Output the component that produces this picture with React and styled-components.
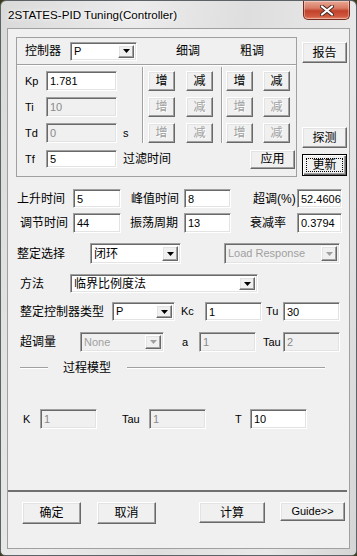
import React from 'react';
import styled, { createGlobalStyle, css } from 'styled-components';

const GlobalStyle = createGlobalStyle`
  html, body {
    margin: 0;
    padding: 0;
    background: #3b3a1c;
  }
  body {
    font-family: "Liberation Sans", "Noto Sans CJK SC", sans-serif;
    font-size: 12px;
    color: #000;
  }
  * { box-sizing: border-box; }
`;

const sunken = css`
  border: 1px solid;
  border-color: #a0a0a0 #ffffff #ffffff #a0a0a0;
  box-shadow: inset 1px 1px 0 #696969, inset -1px -1px 0 #e3e3e3;
`;

const raised = css`
  border: 1px solid;
  border-color: #ffffff #696969 #696969 #ffffff;
  box-shadow: inset -1px -1px 0 #a0a0a0, inset 1px 1px 0 #e3e3e3;
  background: #f0f0f0;
`;

const Window = styled.div`
  width: 357px;
  height: 556px;
  border: 1px solid #5d6266;
  border-radius: 6px 6px 5px 5px;
  background: linear-gradient(100deg, #d9d9d9 0%, #ececec 30%, #dedede 55%, #e9e9e9 80%, #d5d5d5 100%);
  display: flex;
  flex-direction: column;
  overflow: hidden;
`;

const TitleBar = styled.div`
  height: 27px;
  flex-shrink: 0;
  display: flex;
  align-items: flex-start;
  justify-content: space-between;
  padding-left: 7px;
`;

const TitleText = styled.span`
  margin-top: 7px;
  font-family: "Liberation Sans", sans-serif;
  font-size: 11.6px;
  color: #000;
  text-shadow: 0 0 6px #fff, 0 0 3px #fff;
`;

const CloseButton = styled.div`
  width: 47px;
  height: 19px;
  margin-right: 6px;
  border: 1px solid #7a2a1c;
  border-top: none;
  border-radius: 0 0 5px 5px;
  background: linear-gradient(#e9a896 0%, #d77a63 40%, #c2412a 55%, #d0583f 85%, #e58c70 100%);
  box-shadow: inset 0 0 0 1px rgba(255, 255, 255, 0.35);
  display: flex;
  align-items: center;
  justify-content: center;
`;

const Client = styled.div`
  flex: 1;
  margin: 0 6px 6px 6px;
  border: 1px solid #a0a0a0;
  background: #f0f0f0;
  display: flex;
  flex-direction: column;
`;

const TopArea = styled.div`
  display: flex;
  gap: 5px;
  margin-top: 8px;
  padding-left: 8px;
`;

const Group = styled.div`
  width: 281px;
  height: 140px;
  flex-shrink: 0;
  border: 1px solid #a0a0a0;
  display: flex;
  flex-direction: column;
`;

const GroupHeader = styled.div`
  height: 26px;
  display: flex;
  align-items: center;
  padding-left: 8px;
`;

const HSep = styled.div`
  height: 2px;
  border-top: 1px solid #a0a0a0;
  border-bottom: 1px solid #ffffff;
`;

const GroupBody = styled.div`
  display: flex;
  height: 76px;
  margin-top: 1px;
`;

const ParamCol = styled.div`
  width: 125px;
  padding: 4px 0 0 8px;
  display: flex;
  flex-direction: column;
  gap: 6px;
`;

const VSep = styled.div`
  width: 2px;
  border-left: 1px solid #a0a0a0;
  border-right: 1px solid #ffffff;
`;

const BtnGrid = styled.div`
  width: ${p => p.$w}px;
  padding: 4px 0 0 ${p => p.$pl}px;
  display: grid;
  grid-template-columns: 27px 27px;
  grid-auto-rows: 20px;
  column-gap: ${p => p.$gap}px;
  row-gap: 6px;
  align-content: start;
`;

const SideCol = styled.div`
  width: 45px;
  display: flex;
  flex-direction: column;
`;

const Row = styled.div`
  display: flex;
  align-items: center;
  height: ${p => p.$h || 20}px;
  margin-top: ${p => p.$mt || 0}px;
  padding-left: ${p => (p.$pl === undefined ? 9 : p.$pl)}px;
  flex-shrink: 0;
`;

const Label = styled.span`
  width: ${p => (p.$w ? `${p.$w}px` : 'auto')};
  padding-left: ${p => p.$pl || 0}px;
  margin-left: ${p => p.$ml || 0}px;
  flex-shrink: 0;
  font-size: ${p => (p.$latin ? '11px' : '12px')};
  line-height: 1;
  white-space: nowrap;
`;

const Field = styled.input.attrs({ readOnly: true })`
  ${sunken}
  width: ${p => p.$w}px;
  height: ${p => p.$h || 20}px;
  flex-shrink: 0;
  padding: 0 0 0 3px;
  margin: 0;
  font-family: "Liberation Sans", sans-serif;
  font-size: 11px;
  color: #000;
  background: #ffffff;
  outline: none;
  &:disabled {
    background: #f0f0f0;
    color: #8a8a8a;
  }
`;

const ComboBox = styled.div`
  ${sunken}
  width: ${p => p.$w}px;
  height: ${p => p.$h || 20}px;
  flex-shrink: 0;
  padding: 2px;
  display: flex;
  align-items: stretch;
  background: ${p => (p.$disabled ? '#f0f0f0' : '#ffffff')};
`;

const ComboText = styled.span`
  flex: 1;
  display: flex;
  align-items: center;
  padding-left: 1px;
  font-size: ${p => (p.$latin ? '11px' : '12px')};
  line-height: 1;
  color: ${p => (p.$disabled ? '#a0a0a0' : '#000')};
  white-space: nowrap;
`;

const ComboArrow = styled.span`
  ${raised}
  width: 16px;
  display: flex;
  align-items: center;
  justify-content: center;
`;

const Button = styled.button`
  ${raised}
  width: ${p => p.$w}px;
  height: ${p => p.$h || 20}px;
  flex-shrink: 0;
  margin: 0;
  margin-top: ${p => p.$mt || 0}px;
  margin-left: ${p => p.$ml || 0}px;
  padding: 0;
  font-family: "Liberation Sans", "Noto Sans CJK SC", sans-serif;
  font-size: ${p => (p.$latin ? '11px' : '12px')};
  color: #000;
  line-height: 1;
  &:disabled {
    color: #a0a0a0;
    text-shadow: 1px 1px 0 #ffffff;
  }
  ${p => p.$default && css`
    border: 1px solid #000;
    box-shadow: inset 1px 1px 0 #ffffff, inset -1px -1px 0 #696969, inset -2px -2px 0 #a0a0a0;
    outline: 1px dotted #000;
    outline-offset: -5px;
  `}
`;

const SectionRow = styled.div`
  display: flex;
  align-items: center;
  height: 16px;
  margin-top: 8px;
  padding-left: 12px;
`;

const Line = styled.div`
  width: ${p => p.$w}px;
  margin-left: ${p => p.$ml || 0}px;
  height: 2px;
  border-top: 1px solid #a0a0a0;
  border-bottom: 1px solid #ffffff;
`;

const SectionTitle = styled.span`
  margin-left: 15px;
  width: 48px;
  font-size: 12px;
  line-height: 1;
  white-space: nowrap;
`;

const Divider = styled.div`
  width: 339px;
  height: 2px;
  margin-top: 61px;
  background: #707070;
  flex-shrink: 0;
`;

const Footer = styled.div`
  display: flex;
  align-items: flex-start;
  margin-top: 10px;
  padding-left: 14px;
`;

const Arrow = ({ disabled }) => (
  <svg width="7" height="4" viewBox="0 0 7 4">
    <polygon points="0,0 7,0 3.5,4" fill={disabled ? '#a0a0a0' : '#000'} />
  </svg>
);

const Combo = ({ w, h, value, latin, disabled }) => (
  <ComboBox $w={w} $h={h} $disabled={disabled}>
    <ComboText $latin={latin} $disabled={disabled}>{value}</ComboText>
    <ComboArrow><Arrow disabled={disabled} /></ComboArrow>
  </ComboBox>
);

const CloseGlyph = () => (
  <svg width="14" height="11" viewBox="0 0 14 11">
    <path d="M2 1.5 L12 9.5 M12 1.5 L2 9.5" stroke="#4a2a26" strokeWidth="4" strokeLinecap="round" />
    <path d="M2 1.5 L12 9.5 M12 1.5 L2 9.5" stroke="#ffffff" strokeWidth="2.2" strokeLinecap="round" />
  </svg>
);

const params = [
  { name: 'Kp', value: '1.781', disabled: false },
  { name: 'Ti', value: '10', disabled: true },
  { name: 'Td', value: '0', disabled: true, unit: 's' },
];

const TuneButtons = ({ w, pl, gap }) => (
  <BtnGrid $w={w} $pl={pl} $gap={gap}>
    {params.map(p => (
      <React.Fragment key={p.name}>
        <Button $w={27} disabled={p.disabled}>增</Button>
        <Button $w={27} disabled={p.disabled}>减</Button>
      </React.Fragment>
    ))}
  </BtnGrid>
);

export default function App() {
  return (
    <>
      <GlobalStyle />
      <Window>
        <TitleBar>
          <TitleText>2STATES-PID Tuning(Controller)</TitleText>
          <CloseButton><CloseGlyph /></CloseButton>
        </TitleBar>
        <Client>
          <TopArea>
            <Group>
              <GroupHeader>
                <Label $w={45}>控制器</Label>
                <Combo w={67} h={19} value="P" latin />
                <Label $ml={39}>细调</Label>
                <Label $ml={40}>粗调</Label>
              </GroupHeader>
              <HSep />
              <GroupBody>
                <ParamCol>
                  {params.map(p => (
                    <Row key={p.name} $pl={0}>
                      <Label $w={21} $latin>{p.name}</Label>
                      <Field $w={71} defaultValue={p.value} disabled={p.disabled} />
                      {p.unit && <Label $ml={6} $latin>{p.unit}</Label>}
                    </Row>
                  ))}
                </ParamCol>
                <VSep />
                <TuneButtons w={77} pl={4} gap={11} />
                <VSep />
                <TuneButtons w={73} pl={3} gap={10} />
              </GroupBody>
              <Row $mt={6} $pl={8}>
                <Label $w={21} $latin>Tf</Label>
                <Field $w={71} $h={18} defaultValue="5" />
                <Label $ml={6}>过滤时间</Label>
                <Button $w={45} $h={19} $ml={79}>应用</Button>
              </Row>
            </Group>
            <SideCol>
              <Button $w={45} $h={21} $mt={5}>报告</Button>
              <Button $w={45} $h={21} $mt={64}>探测</Button>
              <Button $w={45} $h={22} $mt={6} $default>更新</Button>
            </SideCol>
          </TopArea>

          <Row $mt={12} $h={19}>
            <Label $w={56}>上升时间</Label>
            <Field $w={48} $h={19} defaultValue="5" />
            <Label $w={63} $pl={10}>峰值时间</Label>
            <Field $w={47} $h={19} defaultValue="8" />
            <Label $w={66} $pl={22}>超调(%)</Label>
            <Field $w={45} $h={19} defaultValue="52.4606" />
          </Row>
          <Row $mt={5}>
            <Label $w={56} $pl={3}>调节时间</Label>
            <Field $w={48} defaultValue="44" />
            <Label $w={63} $pl={9}>振荡周期</Label>
            <Field $w={47} defaultValue="13" />
            <Label $w={66} $pl={19}>衰减率</Label>
            <Field $w={45} defaultValue="0.3794" />
          </Row>
          <Row $mt={10} $h={21}>
            <Label $w={73}>整定选择</Label>
            <Combo w={91} h={21} value="闭环" />
            <Label $w={43} />
            <Combo w={116} h={21} value="Load Response" latin disabled />
          </Row>
          <Row $mt={10} $h={19}>
            <Label $w={53} $pl={3}>方法</Label>
            <Combo w={188} h={19} value="临界比例度法" />
          </Row>
          <Row $mt={9} $h={19}>
            <Label $w={95} $pl={3}>整定控制器类型</Label>
            <Combo w={63} h={19} value="P" latin />
            <Label $w={30} $pl={6} $latin>Kc</Label>
            <Field $w={57} $h={19} defaultValue="1" />
            <Label $w={21} $pl={4} $latin>Tu</Label>
            <Field $w={57} $h={19} defaultValue="30" />
          </Row>
          <Row $mt={11}>
            <Label $w={63} $pl={3}>超调量</Label>
            <Combo w={84} h={20} value="None" latin disabled />
            <Label $w={35} $pl={18} $latin>a</Label>
            <Field $w={57} defaultValue="1" disabled />
            <Label $w={27} $pl={7} $latin>Tau</Label>
            <Field $w={57} defaultValue="2" disabled />
          </Row>

          <SectionRow>
            <Line $w={28} />
            <SectionTitle>过程模型</SectionTitle>
            <Line $w={198} $ml={16} />
          </SectionRow>

          <Row $mt={33}>
            <Label $w={23} $pl={6} $latin>K</Label>
            <Field $w={57} defaultValue="1" disabled />
            <Label $w={52} $pl={25} $latin>Tau</Label>
            <Field $w={57} defaultValue="1" disabled />
            <Label $w={44} $pl={29} $latin>T</Label>
            <Field $w={57} defaultValue="10" />
          </Row>

          <Divider />
          <Footer>
            <Button $w={59} $h={22}>确定</Button>
            <Button $w={59} $h={22} $ml={16}>取消</Button>
            <Button $w={66} $h={21} $ml={43}>计算</Button>
            <Button $w={65} $h={19} $ml={15} $latin>Guide&gt;&gt;</Button>
          </Footer>
        </Client>
      </Window>
    </>
  );
}
